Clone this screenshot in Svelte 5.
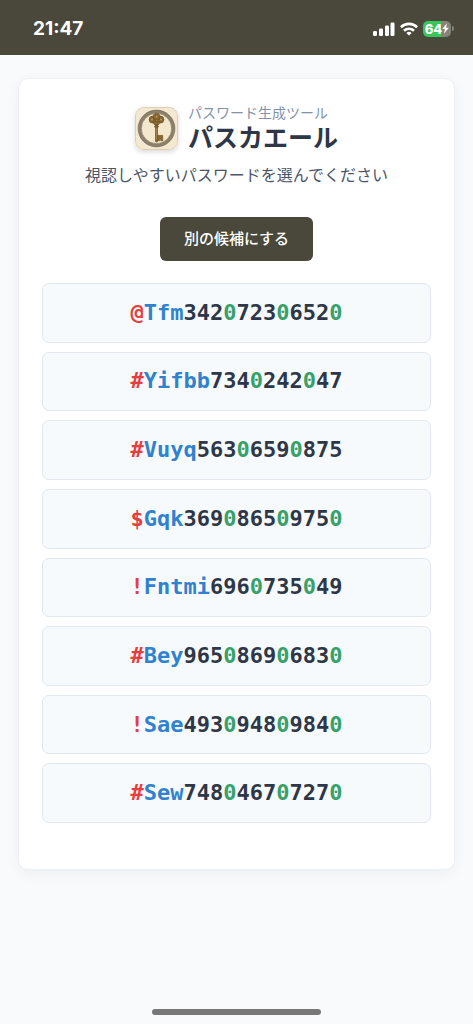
<script>
  const passwords = [
    '@Tfm342072306520',
    '#Yifbb7340242047',
    '#Vuyq56306590875',
    '$Gqk369086509750',
    '!Fntmi6960735049',
    '#Bey965086906830',
    '!Sae493094809840',
    '#Sew748046707270'
  ];

  function kind(ch) {
    if (ch === '0') return 'zero';
    if (/[1-9]/.test(ch)) return 'digit';
    if (/[a-z]/i.test(ch)) return 'letter';
    return 'symbol';
  }
</script>

<div class="page">
  <header class="status">
    <span class="time">21:47</span>
    <div class="indicators">
      <svg width="22" height="14" viewBox="0 0 22 14" fill="#fff" aria-hidden="true">
        <rect x="0" y="9" width="4" height="5" rx="1.2" />
        <rect x="6" y="6.5" width="4" height="7.5" rx="1.2" />
        <rect x="12" y="3.5" width="4" height="10.5" rx="1.2" />
        <rect x="17.5" y="0.5" width="4" height="13.5" rx="1.2" />
      </svg>
      <svg width="18" height="14" viewBox="0 0 18 14" fill="none" stroke="#fff" stroke-width="2.6" aria-hidden="true">
        <path d="M0.9 5.2a11.6 11.6 0 0 1 16.2 0" />
        <path d="M4 8.7a7.2 7.2 0 0 1 10 0" />
        <path d="M9 13.6 6.4 11a3.8 3.8 0 0 1 5.2 0z" fill="#fff" stroke="none" />
      </svg>
      <div class="battery">
        <span class="level">64</span>
        <svg width="7" height="11" viewBox="0 0 7 11" fill="#fff" aria-hidden="true">
          <path d="M4.9 0.3 0.3 6h2.6L2 10.7 6.8 4.7H4.1z" />
        </svg>
      </div>
    </div>
  </header>

  <main>
    <section class="card">
      <div class="brand">
        <svg class="logo" width="43" height="43" viewBox="0 0 43 43" aria-hidden="true">
          <rect x="0.5" y="0.5" width="42" height="42" rx="8" fill="#f4e8d0" stroke="#dfceb0" />
          <circle cx="21.5" cy="21.5" r="16.8" fill="#f3e7cd" stroke="#8b8069" stroke-width="3.2" />
          <circle cx="21.5" cy="21.5" r="18.4" fill="none" stroke="#756a55" stroke-width="0.6" />
          <circle cx="21.5" cy="21.5" r="15.2" fill="none" stroke="#756a55" stroke-width="0.6" />
          <g fill="#8a6833" stroke="#6f5020" stroke-width="0.7">
            <circle cx="17.6" cy="12.6" r="3.5" />
            <circle cx="25.4" cy="12.6" r="3.5" />
            <circle cx="21.5" cy="9.8" r="3.4" />
            <path d="M17.5 14.5h8l-2.3 3.6h-3.4z" />
            <rect x="20.5" y="17.5" width="2" height="17.5" rx="0.8" />
            <rect x="19.6" y="18.8" width="3.8" height="1.5" rx="0.6" />
            <path d="M22.5 28.4h5.2v5.4h-1.9v-1.6h-1.4v1.6h-1.9z" />
          </g>
          <g fill="#b8975c">
            <circle cx="17" cy="12.6" r="1" />
            <circle cx="26" cy="12.6" r="1" />
            <circle cx="21.5" cy="9.4" r="1" />
            <rect x="21.2" y="20.5" width="0.6" height="12" />
          </g>
        </svg>
        <div class="names">
          <p class="tagline">パスワード生成ツール</p>
          <h1>パスカエール</h1>
        </div>
      </div>
      <p class="lead">視認しやすいパスワードを選んでください</p>
      <button class="refresh" type="button">別の候補にする</button>
      <ul>
        {#each passwords as password}
          <li>
            <button class="password" type="button">{#each password as ch}<span class={kind(ch)}>{ch}</span>{/each}</button>
          </li>
        {/each}
      </ul>
    </section>
  </main>

  <div class="home"></div>
</div>

<style>
  :global(body) {
    margin: 0;
    background: #f8fafc;
  }
  .page {
    display: flex;
    flex-direction: column;
    min-height: 100vh;
    background: #f8fafc;
    font-family: 'Noto Sans CJK JP', sans-serif;
    color: #2d3748;
  }
  .status {
    display: flex;
    align-items: center;
    justify-content: space-between;
    box-sizing: border-box;
    height: 55px;
    padding: 2px 22px 0 33px;
    background: #4a483a;
    color: #fff;
    font-family: Inter, sans-serif;
  }
  .time {
    font-size: 19px;
    font-weight: 700;
    line-height: 24px;
  }
  .indicators {
    display: flex;
    align-items: center;
    gap: 5px;
  }
  .battery {
    position: relative;
    display: flex;
    align-items: center;
    justify-content: center;
    box-sizing: border-box;
    width: 28px;
    height: 16px;
    border-radius: 5px;
    background: linear-gradient(90deg, #34c759 64%, #858479 64%);
  }
  .battery::after {
    content: '';
    position: absolute;
    right: -3px;
    top: 5px;
    width: 2px;
    height: 5px;
    border-radius: 0 2px 2px 0;
    background: #858479;
  }
  .level {
    font-size: 13px;
    font-weight: 800;
    line-height: 16px;
  }
  main {
    display: flex;
    flex: 1;
    padding: 23px 18px 139px;
  }
  .card {
    display: flex;
    flex: 1;
    flex-direction: column;
    align-items: center;
    min-width: 0;
    padding: 26px 23px 46px;
    border: 1px solid #eef0f3;
    border-radius: 10px;
    background: #fff;
    box-shadow: 0 4px 14px rgba(0, 0, 0, 0.05);
  }
  .brand {
    display: flex;
    align-items: center;
    gap: 10px;
  }
  .logo {
    border-radius: 8px;
    box-shadow: 0 2px 5px rgba(0, 0, 0, 0.15);
  }
  p,
  h1 {
    margin: 0;
  }
  .tagline {
    color: #8492a9;
    font-size: 14px;
    line-height: 15px;
  }
  h1 {
    font-size: 25px;
    font-weight: 700;
    line-height: 32px;
  }
  .lead {
    margin-top: 10px;
    color: #4a5568;
    font-size: 16px;
    line-height: 24px;
  }
  button {
    font-family: inherit;
    cursor: pointer;
  }
  .refresh {
    height: 44px;
    margin-top: 31px;
    padding: 0 24px 4px;
    border: 0;
    border-radius: 6px;
    background: #4a483a;
    color: #fff;
    font-size: 15px;
    font-weight: 500;
  }
  ul {
    display: grid;
    flex: 1;
    grid-auto-rows: 1fr;
    gap: 9px;
    align-self: stretch;
    margin: 22px 0 0;
    padding: 0;
    list-style: none;
  }
  li {
    display: flex;
  }
  .password {
    flex: 1;
    padding: 12px 8px;
    border: 1px solid #e2e8f0;
    border-radius: 7px;
    background: #f7fafc;
    font-family: 'DejaVu Sans Mono', monospace;
    font-size: 22px;
    font-weight: 700;
    line-height: 28px;
  }
  .symbol {
    color: #e53e3e;
  }
  .letter {
    color: #3182ce;
  }
  .digit {
    color: #2d3748;
  }
  .zero {
    color: #38a169;
  }
  .home {
    align-self: center;
    width: 169px;
    height: 6px;
    margin-bottom: 9px;
    border-radius: 3px;
    background: #777;
  }
</style>
